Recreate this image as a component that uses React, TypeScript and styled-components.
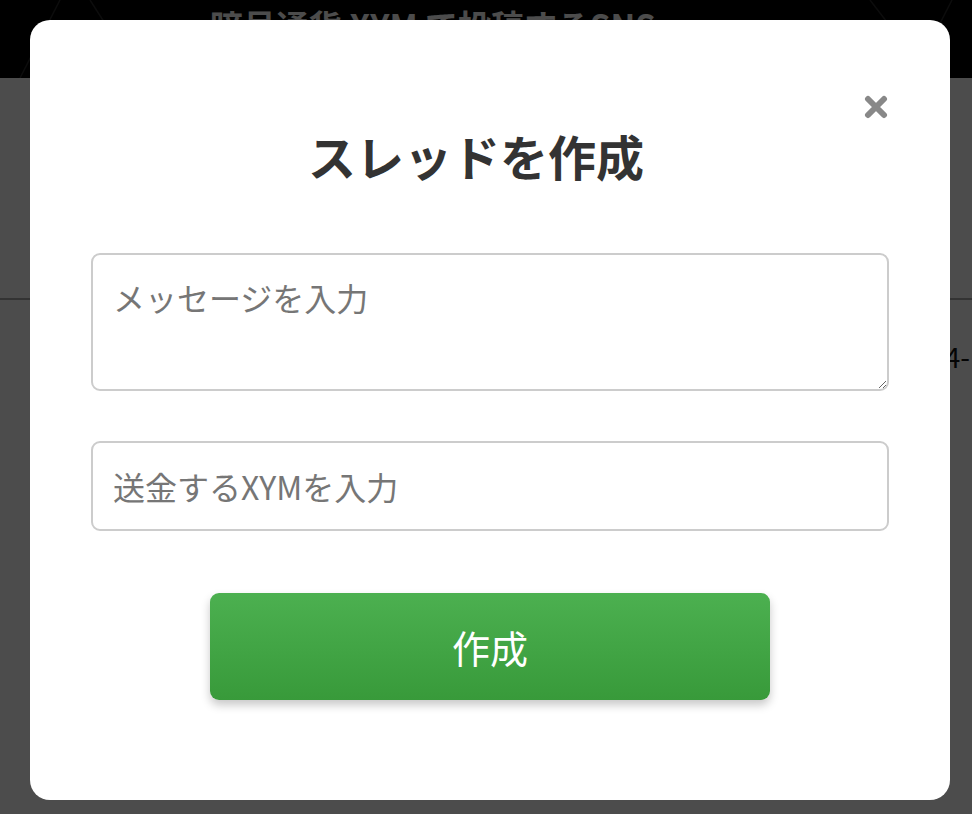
import styled, { createGlobalStyle } from "styled-components";

const GlobalStyle = createGlobalStyle`
  html, body {
    margin: 0;
    padding: 0;
    height: 100%;
    background: #ffffff;
    font-family: "Noto Sans CJK JP", "Noto Sans", sans-serif;
  }
  * {
    box-sizing: border-box;
  }
`;

const Page = styled.div`
  position: relative;
  width: 100%;
  height: 814px;
  overflow: hidden;
`;

const Header = styled.header`
  position: relative;
  height: 78px;
  background: #000;
  display: flex;
  justify-content: center;
  padding: 0 106px 0 0;
  overflow: hidden;
`;

const HeaderArt = styled.svg`
  position: absolute;
  inset: 0;
  width: 100%;
  height: 100%;
`;

const HeaderTitle = styled.h1`
  position: relative;
  margin: 0;
  padding-top: 3px;
  font-size: 33px;
  font-weight: 700;
  line-height: 44px;
  color: #fff;
`;

const Section = styled.section`
  height: 222px;
  border-bottom: 2px solid #aaa;
`;

const Row = styled.div`
  display: flex;
  justify-content: flex-end;
  padding: 38px 0 0;
  font-size: 28px;
  line-height: 36px;
  color: #111;
`;

const RowText = styled.span`
  padding-right: 2px;
`;

const Overlay = styled.div`
  position: absolute;
  inset: 0;
  background: rgba(0, 0, 0, 0.7);
  display: flex;
  align-items: flex-start;
  padding: 20px 22px 0 30px;
`;

const Modal = styled.div`
  position: relative;
  width: 920px;
  height: 780px;
  background: #fff;
  border-radius: 20px;
  padding: 102px 61px 0;
  display: flex;
  flex-direction: column;
`;

const CloseButton = styled.button`
  position: absolute;
  top: 75px;
  right: 62px;
  width: 24px;
  height: 24px;
  padding: 0;
  border: none;
  background: none;
  cursor: pointer;
  display: flex;
`;

const Title = styled.h2`
  margin: 0 28px 0 0;
  text-align: center;
  font-size: 48px;
  line-height: 66px;
  font-weight: 700;
  color: #333;
`;

const fieldBase = `
  width: 100%;
  border: 2px solid #cccccc;
  border-radius: 9px;
  padding: 20px 20px;
  font-family: "Noto Sans CJK JP", "Noto Sans", sans-serif;
  font-size: 32px;
  line-height: 44px;
  color: #333;
  background: #fff;
  outline: none;
  &::placeholder {
    color: #767676;
  }
`;

const MessageArea = styled.textarea`
  ${fieldBase}
  margin-top: 65px;
  height: 138px;
  resize: vertical;
`;

const AmountInput = styled.input`
  ${fieldBase}
  margin-top: 50px;
  height: 90px;
  padding-top: 0;
  padding-bottom: 0;
`;

const SubmitButton = styled.button`
  align-self: center;
  margin-top: 62px;
  width: 560px;
  height: 107px;
  border: none;
  border-radius: 9px;
  background: linear-gradient(to bottom, #4cb050, #389a3a);
  box-shadow: 0 5px 10px rgba(0, 0, 0, 0.22);
  color: #fff;
  font-family: "Noto Sans CJK JP", "Noto Sans", sans-serif;
  font-size: 38px;
  cursor: pointer;
`;

export default function App() {
  return (
    <>
      <GlobalStyle />
      <Page>
        <Header>
          <HeaderArt viewBox="0 0 972 78" preserveAspectRatio="none">
            <g stroke="#2a2a2a" strokeWidth="1.5" fill="none">
              <line x1="60" y1="0" x2="20" y2="78" />
              <line x1="90" y1="0" x2="140" y2="78" />
              <line x1="870" y1="0" x2="930" y2="78" />
              <line x1="952" y1="0" x2="912" y2="78" />
            </g>
          </HeaderArt>
          <HeaderTitle>暗号通貨 XYM で投稿するSNS</HeaderTitle>
        </Header>
        <Section />
        <Row>
          <RowText>4-</RowText>
        </Row>
        <Overlay>
          <Modal>
            <CloseButton aria-label="閉じる">
              <svg width="24" height="24" viewBox="0 0 24 24">
                <path
                  d="M4 4 L20 20 M20 4 L4 20"
                  stroke="#888"
                  strokeWidth="6"
                  strokeLinecap="round"
                />
              </svg>
            </CloseButton>
            <Title>スレッドを作成</Title>
            <MessageArea placeholder="メッセージを入力" />
            <AmountInput type="text" placeholder="送金するXYMを入力" />
            <SubmitButton>作成</SubmitButton>
          </Modal>
        </Overlay>
      </Page>
    </>
  );
}
